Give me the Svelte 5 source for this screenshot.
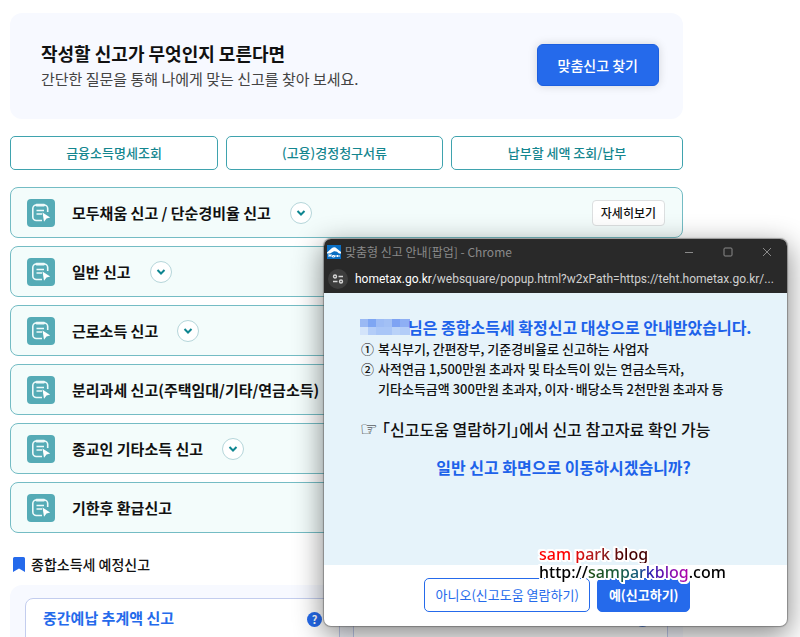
<!--
  Income tax filing menu with the tailored-filing popup window on top.
-->
<script lang="ts">
  interface FilingItem {
    label: string;
    expandable?: boolean;
    detail?: boolean;
  }

  const shortcuts = ['금융소득명세조회', '(고용)경정청구서류', '납부할 세액 조회/납부'];

  const filings: FilingItem[] = [
    { label: '모두채움 신고 / 단순경비율 신고', expandable: true, detail: true },
    { label: '일반 신고', expandable: true },
    { label: '근로소득 신고', expandable: true },
    { label: '분리과세 신고(주택임대/기타/연금소득)' },
    { label: '종교인 기타소득 신고', expandable: true },
    { label: '기한후 환급신고' },
  ];

  // masked taxpayer name, two rows of blocks
  const mask = [
    ['#9ab9f4', '#7ea6f3', '#9dbcf5', '#a2c0f5', '#7ea3f3', '#8eaff4'],
    ['#d3e4fa', '#b3cdf8', '#a9c6f7', '#a9c6f7', '#b9d2f8', '#b3cdf8'],
  ];
</script>

<div class="page">
  <main>
    <section class="intro">
      <div>
        <h1>작성할 신고가 무엇인지 모른다면</h1>
        <p>간단한 질문을 통해 나에게 맞는 신고를 찾아 보세요.</p>
      </div>
      <button type="button" class="find">맞춤신고 찾기</button>
    </section>

    <nav class="shortcuts">
      {#each shortcuts as label}
        <button type="button">{label}</button>
      {/each}
    </nav>

    <ul class="filings">
      {#each filings as item}
        <li>
          <svg class="doc" width="28" height="28" viewBox="0 0 28 28" aria-hidden="true">
            <rect width="28" height="28" rx="4" fill="#55abb6" />
            <path d="M20.700 13V9.500a3.500 3.500 0 0 0-3.500-3.500H9.300a3.500 3.500 0 0 0-3.500 3.500V18a3.500 3.500 0 0 0 3.500 3.500h5.700" fill="none" stroke="#eefafa" stroke-width="1.600" />
            <path d="M9.500 4.800h7.500q1 0 1 1.200t-1 1.500H9.500q-1-.3-1-1.500t1-1.200z" fill="#eefafa" />
            <path d="M9.500 11.500h7.500M9.500 15h5.500" stroke="#eefafa" stroke-width="1.600" />
            <path d="M15.500 13.500l7.700 5-3.700 1-2.500 3.300z" fill="#fff" />
          </svg>
          <span class="label">{item.label}</span>
          {#if item.expandable}
            <button type="button" class="toggle" aria-label="{item.label} 펼치기">
              <svg width="10" height="8" viewBox="0 0 10 8" fill="none" stroke="#0e8590" stroke-width="2">
                <path d="M1.500 2l3.500 3.500L8.500 2" />
              </svg>
            </button>
          {/if}
          {#if item.detail}
            <button type="button" class="detail">자세히보기</button>
          {/if}
        </li>
      {/each}
    </ul>

    <h2>
      <svg width="12" height="15" viewBox="0 0 12 15" aria-hidden="true">
        <path d="M0 1.500Q0 0 1.500 0h9Q12 0 12 1.500V15l-6-3.500L0 15z" fill="#256aeb" />
      </svg>
      종합소득세 예정신고
    </h2>
    <section class="cards">
      <div class="card">
        <h3>중간예납 추계액 신고</h3>
        <button type="button" class="help" aria-label="도움말">?</button>
      </div>
      <div class="card">
        <button type="button" class="help" aria-label="도움말">?</button>
      </div>
    </section>
  </main>

  <div class="popup" role="dialog" aria-labelledby="popup-title">
    <header>
      <div class="titlebar">
        <svg width="14" height="14" viewBox="0 0 14 14" aria-hidden="true">
          <rect width="14" height="14" fill="#0a6fc4" />
          <path d="M0 7.500L5 3q1.500-1 3.500-.5L14 7v1.500h-2q-2-2.500-5-2.200L3 8.500H0z" fill="#fff" />
          <path d="M2 9v3M4 9v3M2 10.500h2M5.500 10.500h2v1.500h-2zM9 12v-2M10.500 12v-2M12 12v-2" stroke="#fff" fill="none" />
        </svg>
        <span id="popup-title">맞춤형 신고 안내[팝업] - Chrome</span>
        <button type="button" aria-label="최소화">
          <svg width="10" height="10" viewBox="0 0 10 10"><path d="M1 5.500h8" /></svg>
        </button>
        <button type="button" aria-label="최대화">
          <svg width="10" height="10" viewBox="0 0 10 10"><rect x="1" y="1" width="8" height="8" rx="1" /></svg>
        </button>
        <button type="button" aria-label="닫기">
          <svg width="10" height="10" viewBox="0 0 10 10"><path d="M1 1l8 8M9 1L1 9" /></svg>
        </button>
      </div>
      <div class="address">
        <button type="button" class="site" aria-label="사이트 정보">
          <svg width="12" height="12" viewBox="0 0 12 12" fill="none" stroke="#d5d5d5" stroke-width="1.400">
            <circle cx="3" cy="3.500" r="1.500" />
            <path d="M6.500 3.500H11M1 8.500h4.500" />
            <circle cx="9" cy="8.500" r="1.500" />
          </svg>
        </button>
        <span class="url"><b>hometax.go.kr</b>/websquare/popup.html?w2xPath=https://teht.hometax.go.kr/...</span>
      </div>
    </header>

    <div class="notice">
      <p class="target">
        <svg width="50" height="16" viewBox="0 0 50 16" shape-rendering="crispEdges" aria-hidden="true">
          {#each mask as row, y}
            {#each row as fill, x}
              <rect x={x * 8} y={y * 8} width="10" height="8" {fill} />
            {/each}
          {/each}
        </svg><span>님은 종합소득세 확정신고 대상으로 안내받았습니다.</span>
      </p>
      <ol>
        <li><span>①</span>복식부기, 간편장부, 기준경비율로 신고하는 사업자</li>
        <li>
          <span>②</span>사적연금 1,500만원 초과자 및 타소득이 있는 연금소득자,<br />기타소득금액 300만원 초과자, 이자·배당소득 2천만원 초과자 등
        </li>
      </ol>
      <p class="guide"><span>☞</span>｢신고도움 열람하기｣에서 신고 참고자료 확인 가능</p>
      <p class="ask">일반 신고 화면으로 이동하시겠습니까?</p>
    </div>

    <footer>
      <button type="button" class="no">아니오(신고도움 열람하기)</button>
      <button type="button" class="yes">예(신고하기)</button>
    </footer>

    <div class="watermark">
      <span class="name">sam park blog</span>
      <span class="link">http://<i>samparkblog</i>.com</span>
    </div>
  </div>
</div>

<style>
  :global(body) {
    background: #fff;
    overflow: hidden;
  }

  .page {
    position: relative;
    height: 100vh;
    overflow: hidden;
    font-family: 'Noto Sans CJK KR', sans-serif;
    color: #111;
  }

  h1,
  h2,
  h3,
  p,
  ul,
  ol {
    margin: 0;
    padding: 0;
    list-style: none;
  }

  button {
    font: inherit;
    padding: 0;
    cursor: pointer;
    white-space: nowrap;
  }

  main {
    padding: 13px 117px 0 10px;
  }

  .intro {
    display: flex;
    align-items: flex-start;
    justify-content: space-between;
    padding: 27px 24px 28px 31px;
    border-radius: 12px;
    background: #f7f9ff;
  }

  .intro h1 {
    font-size: 18px;
    line-height: 27px;
    font-weight: 700;
  }

  .intro p {
    font-size: 15px;
    line-height: 24px;
    color: #444;
  }

  .find {
    margin-top: 4px;
    padding: 9px 20px;
    border: 1px solid #1c5fe0;
    border-radius: 6px;
    background: #256aeb;
    box-shadow: 0 0 10px rgba(0, 0, 0, 0.15);
    color: #fff;
    font-size: 14px;
    line-height: 22px;
    font-weight: 500;
  }

  .shortcuts {
    display: grid;
    grid-template-columns: 208fr 217fr 232fr;
    gap: 8px;
    margin-top: 17px;
  }

  .shortcuts button {
    border: 1px solid #3fa3ae;
    border-radius: 5px;
    background: #fff;
    color: #14868f;
    font-size: 13px;
    line-height: 32px;
    font-weight: 500;
  }

  .filings {
    display: grid;
    gap: 8px;
    margin-top: 17px;
  }

  .filings li {
    display: flex;
    align-items: center;
    height: 49px;
    padding: 0 17px 0 16px;
    border: 1px solid #74bcc4;
    border-radius: 8px;
    background: #f3fcfb;
  }

  .label {
    margin-left: 17px;
    font-size: 15px;
    font-weight: 700;
    white-space: nowrap;
  }

  .toggle {
    display: flex;
    align-items: center;
    justify-content: center;
    width: 22px;
    height: 22px;
    margin-left: 19px;
    border: 1px solid #b5d6da;
    border-radius: 50%;
    background: #fff;
  }

  .detail {
    margin-left: auto;
    padding: 0 8px;
    border: 1px solid #dcdfe0;
    border-radius: 4px;
    background: #fff;
    color: #111;
    font-size: 12px;
    line-height: 24px;
    font-weight: 500;
  }

  h2 {
    display: flex;
    align-items: center;
    gap: 6px;
    margin: 20px 0 10px;
    padding-left: 3px;
    font-size: 14px;
    line-height: 22px;
    font-weight: 500;
  }

  .cards {
    display: grid;
    grid-template-columns: 1fr 1fr;
    gap: 13px;
    padding: 13px 15px;
    border-radius: 12px;
    background: #f7f9ff;
  }

  .card {
    display: flex;
    align-items: flex-start;
    height: 100px;
    padding: 8px 17px;
    border: 1px solid #c3cdee;
    border-radius: 8px;
    background: #fff;
  }

  .card h3 {
    color: #256aeb;
    font-size: 15px;
    line-height: 22px;
    font-weight: 700;
  }

  .help {
    width: 15px;
    height: 15px;
    margin-top: 5px;
    margin-left: auto;
    border: 0;
    border-radius: 50%;
    background: #256aeb;
    color: #fff;
    font-size: 11px;
    line-height: 15px;
    font-weight: 700;
  }

  .popup {
    position: absolute;
    top: 239px;
    left: 324px;
    right: 13px;
    border-radius: 7px;
    background: #fff;
    box-shadow:
      0 0 1px 1px rgba(80, 80, 80, 0.5),
      0 8px 28px 2px rgba(0, 0, 0, 0.45);
  }

  .popup header {
    border-radius: 7px 7px 0 0;
    background: #292929;
  }

  .titlebar {
    display: flex;
    align-items: center;
    height: 25px;
    padding-left: 3px;
    padding-right: 15px;
    color: #8a8a8a;
    font-size: 12px;
  }

  .titlebar span {
    flex: 1;
    margin-left: 4px;
  }

  .titlebar button {
    display: flex;
    margin-left: 29px;
    border: 0;
    background: none;
  }

  .titlebar button svg {
    fill: none;
    stroke: #8a8a8a;
  }

  .address {
    display: flex;
    align-items: center;
    height: 29px;
    padding: 0 4px;
  }

  .site {
    display: flex;
    flex-shrink: 0;
    align-items: center;
    justify-content: center;
    width: 20px;
    height: 20px;
    border: 0;
    border-radius: 50%;
    background: #3d3d3d;
  }

  .url {
    margin-left: 7px;
    font-family: Roboto, sans-serif;
    font-size: 12px;
    color: #d0d0d0;
    white-space: nowrap;
  }

  .url b {
    color: #fff;
    font-weight: 400;
  }

  .notice {
    height: 250px;
    padding: 22px 36px 0;
    background: #e6f3fa;
    font-weight: 500;
    white-space: nowrap;
  }

  .target {
    display: flex;
    align-items: center;
  }

  .target,
  .ask {
    color: #1d62ea;
    font-size: 16px;
    line-height: 24px;
    font-weight: 700;
  }

  .target svg {
    flex-shrink: 0;
  }

  .target span {
    margin-left: -2px;
  }

  .notice li {
    position: relative;
    padding-left: 18px;
    font-size: 13px;
    line-height: 20px;
  }

  .notice li span {
    position: absolute;
    left: 1px;
  }

  .guide {
    margin-top: 18px;
    font-size: 16px;
    line-height: 24px;
  }

  .guide span {
    display: inline-block;
    width: 22px;
    font-family: 'DejaVu Sans', sans-serif;
    font-size: 20px;
  }

  .ask {
    margin-top: 14px;
    padding-left: 16px;
    text-align: center;
  }

  .popup footer {
    display: flex;
    gap: 7px;
    padding: 13px 97px 14px 100px;
  }

  .popup footer button {
    border: 1px solid #256aeb;
    border-radius: 5px;
    background: #fff;
    color: #256aeb;
    font-size: 13px;
    line-height: 32px;
  }

  .popup footer .no {
    flex: 167;
  }

  .popup footer .yes {
    flex: 92;
    background: #256aeb;
    color: #fff;
    font-weight: 700;
  }

  .watermark {
    position: absolute;
    left: 215px;
    bottom: 45px;
    display: grid;
    justify-items: start;
    font-family: 'Noto Sans', sans-serif;
    font-size: 16px;
    line-height: 18px;
    font-weight: 500;
    color: #000;
    filter: drop-shadow(1px 0 0 #fff) drop-shadow(-1px 0 0 #fff) drop-shadow(0 1px 0 #fff) drop-shadow(0 -1px 0 #fff)
      drop-shadow(1px 1px 0 #fff) drop-shadow(-1px -1px 0 #fff);
  }

  .name,
  .link i {
    background-clip: text;
    color: transparent;
  }

  .name {
    background-image: linear-gradient(90deg, #f00 25%, #a02020 55%, #400 80%);
  }

  .link i {
    font-style: normal;
    background-image: linear-gradient(90deg, #1c4a10, #1a5c3c 30%, #125a80 50%, #2020b0 60%, #8010b0 80%, #b000a8);
  }
</style>
